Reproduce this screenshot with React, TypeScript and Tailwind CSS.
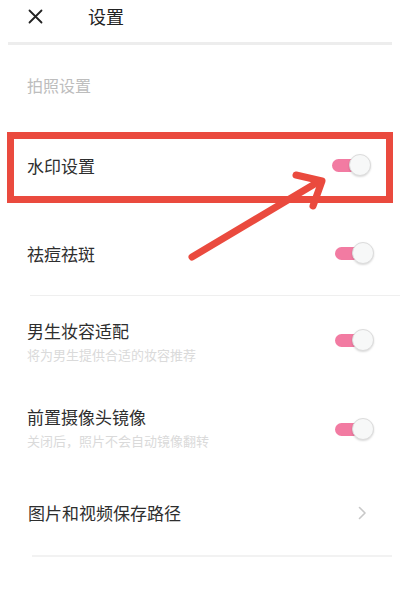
import React from "react";

const font = { fontFamily: '"Noto Sans CJK SC", "Noto Sans", sans-serif' };

function Toggle() {
  return (
    <div className="flex items-center">
      <div className="w-[22px] h-[13px] rounded-l-full bg-[#f27ba2]" />
      <div className="-ml-[5px] w-[22px] h-[22px] rounded-full bg-[#f7f8f8] border border-[#dcdcdc] shadow-[0_1px_2px_rgba(0,0,0,0.15)]" />
    </div>
  );
}

export default function App() {
  return (
    <div className="relative w-[400px] h-[614px] bg-white overflow-hidden" style={font}>
      {/* header */}
      <div className="h-[32px] flex items-center">
        <svg className="ml-[28px] w-[15px] h-[15px]" viewBox="0 0 15 15">
          <path d="M1.5 1.5 L13.5 13.5 M13.5 1.5 L1.5 13.5" stroke="#222" strokeWidth="1.8" strokeLinecap="round" />
        </svg>
        <span className="ml-[45px] text-[18px] text-[#222] leading-none">设置</span>
      </div>
      <div className="mt-[10px] mx-2 h-[3px] bg-[#ededed]" />

      {/* section label */}
      <div className="h-[87px] flex items-start pt-[32px] pl-[27px]">
        <span className="text-[16px] text-[#bdbdbd] leading-none">拍照设置</span>
      </div>

      {/* highlighted row */}
      <div className="mx-[7px] h-[71px] border-[7px] border-[#ea4a3e] flex items-center justify-between pl-[13px] pr-[15px] pb-[5px]">
        <span className="text-[17px] text-[#2e2e2e] leading-none">水印设置</span>
        <Toggle />
      </div>

      {/* 祛痘祛斑 */}
      <div className="h-[92px] flex items-center justify-between pl-[27px] pr-[26px] pt-[8px]">
        <span className="text-[17px] text-[#2e2e2e] leading-none">祛痘祛斑</span>
        <Toggle />
      </div>
      <div className="ml-[30px] h-[1px] bg-[#efefef]" />

      {/* 男生妆容适配 */}
      <div className="h-[90px] flex items-start justify-between pl-[27px] pr-[26px] pt-[26px]">
        <div className="flex flex-col">
          <span className="text-[17px] text-[#2e2e2e] leading-none">男生妆容适配</span>
          <span className="mt-[9px] text-[13px] text-[#dadada] leading-none">将为男生提供合适的妆容推荐</span>
        </div>
        <div className="mt-[7px]">
          <Toggle />
        </div>
      </div>

      {/* 前置摄像头镜像 */}
      <div className="h-[84px] flex items-start justify-between pl-[27px] pr-[26px] pt-[22px]">
        <div className="flex flex-col">
          <span className="text-[17px] text-[#2e2e2e] leading-none">前置摄像头镜像</span>
          <span className="mt-[9px] text-[13px] text-[#dadada] leading-none">关闭后，照片不会自动镜像翻转</span>
        </div>
        <div className="mt-[10px]">
          <Toggle />
        </div>
      </div>

      {/* 图片和视频保存路径 */}
      <div className="h-[85px] flex items-center justify-between pl-[28px] pr-[33px]">
        <span className="text-[17px] text-[#2e2e2e] leading-none">图片和视频保存路径</span>
        <svg className="w-[9px] h-[14px]" viewBox="0 0 9 14">
          <path d="M1.5 1.5 L7 7 L1.5 12.5" stroke="#c8c8c8" strokeWidth="1.6" fill="none" strokeLinecap="round" strokeLinejoin="round" />
        </svg>
      </div>
      <div className="ml-[32px] mr-[8px] h-[2px] bg-[#f2f2f2]" />

      {/* annotation arrow */}
      <svg className="absolute left-0 top-0 w-[400px] h-[614px] pointer-events-none" viewBox="0 0 400 614">
        <path d="M192 257 L318 182" stroke="#ea4a3e" strokeWidth="7" strokeLinecap="round" />
        <path d="M296 175 L322 181 L313 206" stroke="#ea4a3e" strokeWidth="7" fill="none" strokeLinecap="round" strokeLinejoin="round" />
      </svg>
    </div>
  );
}
